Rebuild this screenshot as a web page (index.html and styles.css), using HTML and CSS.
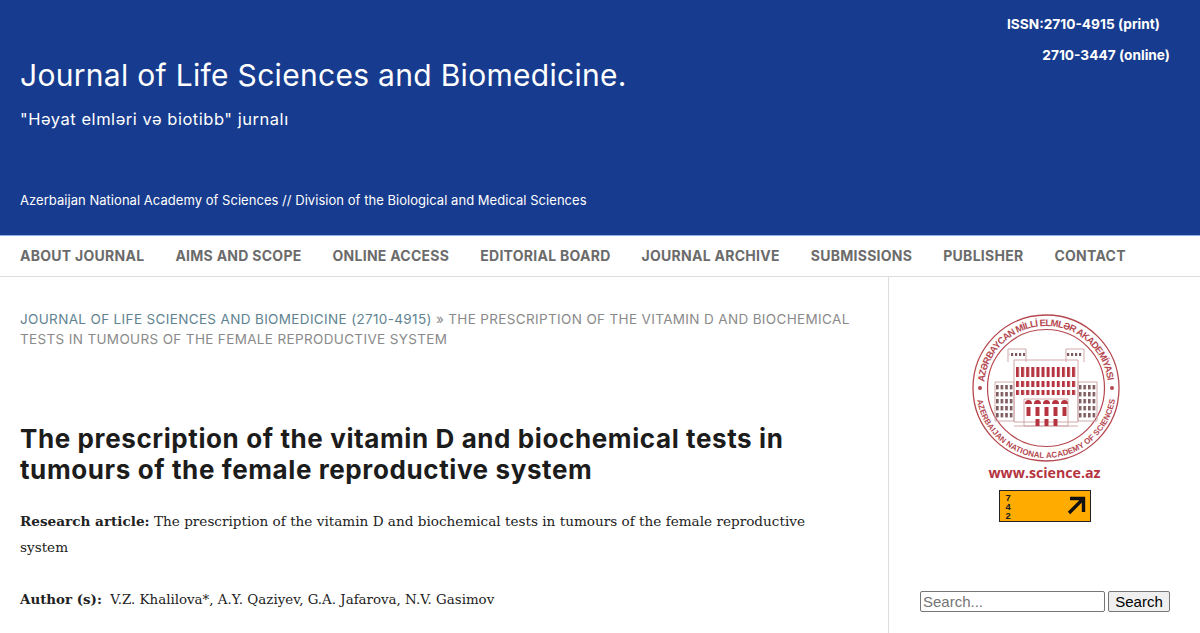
FILE: index.html
```html
<!DOCTYPE html>
<html lang="en">

<head>
  <meta charset="UTF-8">
  <meta name="viewport" content="width=device-width, initial-scale=1.0">
  <title>The prescription of the vitamin D and biochemical tests in tumours of the female reproductive system</title>

  <link rel="stylesheet" href="styles.css">
</head>

<body>
  <header class="site-head">
    <div class="site-head__brand">
      <a class="site-head__title">Journal of Life Sciences and Biomedicine.</a>
      <p class="site-head__sub">"Həyat elmləri və biotibb" jurnalı</p>
      <p class="site-head__org">Azerbaijan National Academy of Sciences // Division of the Biological and Medical Sciences</p>
    </div>
    <div class="site-head__issn">
      <p class="site-head__print">ISSN:2710-4915 (print)</p>
      <p>2710-3447 (online)</p>
    </div>
  </header>

  <nav class="nav">
    <a>About Journal</a>
    <a>Aims and Scope</a>
    <a>Online Access</a>
    <a>Editorial Board</a>
    <a>Journal Archive</a>
    <a>Submissions</a>
    <a>Publisher</a>
    <a>Contact</a>
  </nav>

  <div class="page">
    <main class="article">
      <p class="crumbs"><a>Journal of Life Sciences and Biomedicine (2710-4915)</a> » The prescription of the vitamin D and biochemical tests in tumours of the female reproductive system</p>
      <h1>The prescription of the vitamin D and biochemical tests in tumours of the female reproductive system</h1>
      <p class="lead"><b>Research article:</b> The prescription of the vitamin D and biochemical tests in tumours of the female reproductive system</p>
      <p class="authors"><b>Author (s):</b>&nbsp; V.Z. Khalilova*, A.Y. Qaziyev, G.A. Jafarova, N.V. Gasimov</p>
    </main>

    <aside class="side">
      <svg class="seal" width="150" height="150" viewBox="0 0 150 150">
        <defs>
          <path id="arcTop" d="M13 75a62 62 0 0 1 124 0"/>
          <path id="arcBottom" d="M5 75a70 70 0 0 0 140 0"/>
          <pattern id="winRed" width="5.100" height="40" patternUnits="userSpaceOnUse" x="45">
            <rect width="3" height="40" fill="#b5343f"/>
          </pattern>
          <pattern id="winWing" width="4.600" height="7" patternUnits="userSpaceOnUse" x="25" y="72">
            <rect width="2.600" height="4.400" fill="#7d5a5e"/>
          </pattern>
          <pattern id="winTower" width="4" height="10" patternUnits="userSpaceOnUse" y="40">
            <rect width="2.200" height="4" fill="#7d5a5e"/>
          </pattern>
        </defs>
        <circle cx="75" cy="75" r="73" fill="none" stroke="#b5474f" stroke-width="1.300"/>
        <circle cx="75" cy="75" r="58.500" fill="none" stroke="#b5474f" stroke-width="1.200"/>
        <text class="seal__txt"><textPath href="#arcTop" startOffset="6" textLength="181">AZƏRBAYCAN MİLLİ ELMLƏR AKADEMİYASI</textPath></text>
        <text class="seal__txt seal__txt--sm"><textPath href="#arcBottom" startOffset="12" textLength="196">AZERBAIJAN NATIONAL ACADEMY OF SCIENCES</textPath></text>
        <circle cx="9" cy="75" r="2" fill="#b5474f"/>
        <circle cx="141" cy="75" r="2" fill="#b5474f"/>
        <!-- building -->
        <g fill="none" stroke="#cfa9ab" stroke-width="1">
          <path d="M24 69h19v39H24zM107 69h19v39h-19zM43 47h64v62H43z"/>
          <path d="M37 49V36h18v13M95 49V36h18v13"/>
          <path d="M53 86h44v27H53z"/>
          <path d="M43 113h64"/>
        </g>
        <rect x="38" y="39" width="16" height="4" fill="url(#winTower)"/>
        <rect x="96" y="39" width="16" height="4" fill="url(#winTower)"/>
        <rect x="45" y="54" width="61" height="10" fill="url(#winRed)"/>
        <rect x="45" y="68" width="61" height="6" fill="url(#winRed)"/>
        <rect x="45" y="77" width="61" height="5" fill="url(#winRed)"/>
        <rect x="25" y="72" width="17" height="34" fill="url(#winWing)"/>
        <rect x="108" y="72" width="17" height="34" fill="url(#winWing)"/>
        <g fill="#b5343f">
          <path d="M54 91a3.500 4 0 0 1 7 0zM63 91a3.500 4 0 0 1 7 0zM72 91a3.500 4 0 0 1 7 0zM81 91a3.500 4 0 0 1 7 0zM90 91a3.500 4 0 0 1 7 0z"/>
          <path d="M55.500 94h4v9h-4zM64.500 94h4v9h-4zM73.500 94h4v9h-4zM82.500 94h4v9h-4zM91.500 94h4v9h-4z"/>
          <path d="M64.500 106h4v7h-4zM73.500 106h4v7h-4zM82.500 106h4v7h-4z"/>
        </g>
      </svg>
      <a class="side__url">www.science.az</a>
      <div class="badge">
        <span class="badge__num">742</span>
        <svg width="22" height="20" viewBox="0 0 22 20">
          <path d="M5 17 19 3M6 2.500h13.500V16" fill="none" stroke="#111" stroke-width="3.400"/>
        </svg>
      </div>
      <form class="search">
        <input type="text" placeholder="Search...">
        <button type="button">Search</button>
      </form>
    </aside>
  </div>
</body>

</html>
```

FILE: styles.css
```css
html {
  box-sizing: border-box;
}

*,
*:before,
*:after {
  box-sizing: inherit;
}

body {
  margin: 0;
  height: 633px;
  overflow: hidden;
  background: #fff;
  font-family: "Noto Sans", sans-serif;
}

p {
  margin: 0;
}

.site-head {
  display: flex;
  justify-content: space-between;
  height: 236px;
  padding: 0 30px 0 20px;
  background: #173b8e;
  border-bottom: 1px solid #8fb0ea;
  color: #fff;
  font-family: Inter, sans-serif;
}

.site-head__brand {
  padding-top: 57px;
}

.site-head__title {
  display: block;
  font-size: 30px;
  line-height: 36px;
  letter-spacing: .3px;
}

.site-head__sub {
  margin-top: 16px;
  font-size: 16.500px;
  line-height: 20px;
  letter-spacing: .53px;
}

.site-head__org {
  margin-top: 61px;
  font-size: 13px;
  line-height: 20px;
  letter-spacing: .04px;
}

.site-head__issn {
  padding-top: 9px;
  text-align: right;
  font-size: 13.700px;
  font-weight: 700;
}

.site-head__issn p {
  line-height: 31px;
}

.site-head__issn .site-head__print {
  margin-right: 10px;
}

.nav {
  display: flex;
  gap: 31px;
  align-items: center;
  height: 41px;
  padding: 0 0 2px 20px;
  border-bottom: 1px solid #ddd;
  font-family: Inter, sans-serif;
  font-size: 14px;
  font-weight: 700;
  letter-spacing: .27px;
  color: #6b6b6b;
  text-transform: uppercase;
}

.page {
  display: flex;
  height: 356px;
}

.article {
  width: 888px;
  padding: 32px 30px 0 20px;
}

.crumbs {
  font-family: Inter, sans-serif;
  font-size: 13.500px;
  line-height: 20px;
  letter-spacing: .35px;
  color: #8a8a8a;
  text-transform: uppercase;
}

.crumbs a {
  color: #5f8391;
}

h1 {
  margin: 74px 0 0;
  font-family: Inter, sans-serif;
  font-size: 26px;
  font-weight: 700;
  line-height: 31px;
  letter-spacing: .6px;
  color: #1c1c1c;
}

.lead,
.authors {
  font-family: "DejaVu Serif", serif;
  line-height: 26px;
  color: #222;
}

.lead {
  max-width: 820px;
  margin-top: 23px;
  font-size: 13.600px;
}

.authors {
  margin-top: 26px;
  font-size: 13.400px;
}

.side {
  flex: 1;
  display: flex;
  flex-direction: column;
  align-items: center;
  padding-top: 36px;
  border-left: 1px solid #ddd;
}

.seal {
  display: block;
  margin-left: 2px;
}

.seal__txt {
  font-family: "Liberation Sans", sans-serif;
  font-size: 9.500px;
  font-weight: 700;
  fill: #b5474f;
}

.seal__txt--sm {
  font-size: 8px;
}

.side__url {
  font-family: "Open Sans", sans-serif;
  font-size: 14.200px;
  font-weight: 700;
  color: #b5343f;
}

.badge {
  display: flex;
  justify-content: space-between;
  align-items: center;
  width: 92px;
  height: 32px;
  margin-top: 8px;
  padding: 0 4px 0 3px;
  background: #ffab00;
  border: 1px solid #222;
}

.badge__num {
  writing-mode: vertical-rl;
  text-orientation: upright;
  font-family: "Liberation Mono", monospace;
  font-size: 9.500px;
  letter-spacing: -2px;
  font-weight: 700;
  color: #222;
}

.search {
  display: flex;
  gap: 3px;
  margin: 69px 0 0 1px;
}

.search input {
  width: 185px;
  height: 21px;
  padding: 1px 2px;
  border: 1px solid #767676;
  border-radius: 2px;
  font-family: "Liberation Sans", sans-serif;
  font-size: 15px;
}

.search button {
  width: 62px;
  height: 21px;
  padding: 0;
  background: #efefef;
  border: 1px solid #767676;
  border-radius: 2px;
  font-family: "Liberation Sans", sans-serif;
  font-size: 15px;
  color: #000;
}
```
